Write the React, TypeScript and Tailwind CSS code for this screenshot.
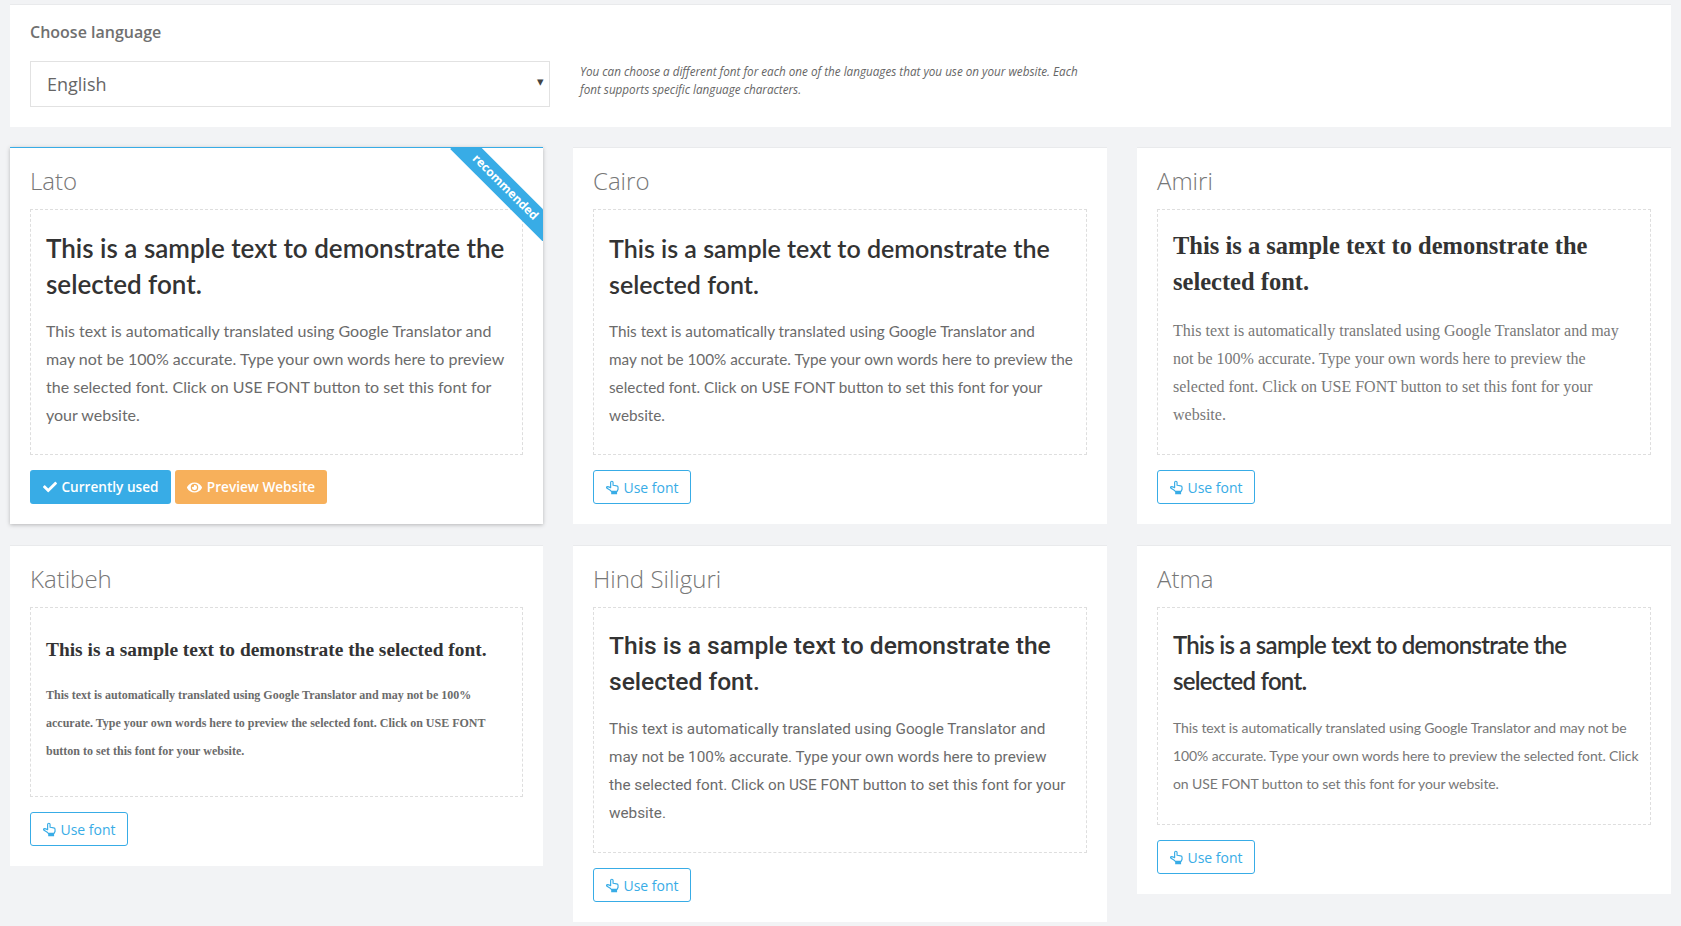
import React from "react";
import { FaCheck, FaEye } from "react-icons/fa";

type Card = {
  name: string;
  head: string[];
  body: string[];
  headClass: string;
  bodyClass: string;
  boxClass: string;
  current?: boolean;
};

const cards: Card[] = [
  {
    name: "Lato",
    head: ["This is a sample text to demonstrate the", "selected font."],
    body: [
      "This text is automatically translated using Google Translator and",
      "may not be 100% accurate. Type your own words here to preview",
      "the selected font. Click on USE FONT button to set this font for",
      "your website.",
    ],
    headClass: "font-['Lato',sans-serif] font-semibold text-[26px] leading-[36px] mt-[5px] mb-[15px]",
    bodyClass: "font-['Lato',sans-serif] text-[16px] leading-[28px] text-[#6b6b6b]",
    boxClass: "h-[246px]",
    current: true,
  },
  {
    name: "Cairo",
    head: ["This is a sample text to demonstrate the", "selected font."],
    body: [
      "This text is automatically translated using Google Translator and",
      "may not be 100% accurate. Type your own words here to preview the",
      "selected font. Click on USE FONT button to set this font for your",
      "website.",
    ],
    headClass: "font-['Lato',sans-serif] font-semibold text-[25px] leading-[36px] mt-[5px] mb-[15px]",
    bodyClass: "font-['Lato',sans-serif] text-[15.3px] leading-[28px] text-[#6b6b6b]",
    boxClass: "h-[246px]",
  },
  {
    name: "Amiri",
    head: ["This is a sample text to demonstrate the", "selected font."],
    body: [
      "This text is automatically translated using Google Translator and may",
      "not be 100% accurate. Type your own words here to preview the",
      "selected font. Click on USE FONT button to set this font for your",
      "website.",
    ],
    headClass: "font-['Liberation_Serif',serif] font-bold text-[24.5px] leading-[36px] mt-[3px] mb-[17px]",
    bodyClass: "font-['Liberation_Serif',serif] text-[16px] leading-[28px] text-[#777]",
    boxClass: "h-[246px]",
  },
  {
    name: "Katibeh",
    head: ["This is a sample text to demonstrate the selected font."],
    body: [
      "This text is automatically translated using Google Translator and may not be 100%",
      "accurate. Type your own words here to preview the selected font. Click on USE FONT",
      "button to set this font for your website.",
    ],
    headClass: "font-['Liberation_Serif',serif] font-bold text-[19.4px] leading-[36px] mt-[9px] mb-[13px]",
    bodyClass: "font-['Liberation_Serif',serif] font-bold text-[12px] leading-[28px] text-[#6b6b6b]",
    boxClass: "h-[190px]",
  },
  {
    name: "Hind Siliguri",
    head: ["This is a sample text to demonstrate the", "selected font."],
    body: [
      "This text is automatically translated using Google Translator and",
      "may not be 100% accurate. Type your own words here to preview",
      "the selected font. Click on USE FONT button to set this font for your",
      "website.",
    ],
    headClass: "font-['Roboto',sans-serif] font-medium text-[24.6px] leading-[36px] mt-[5px] mb-[15px]",
    bodyClass: "font-['Roboto',sans-serif] text-[15.3px] leading-[28px] text-[#6b6b6b]",
    boxClass: "h-[246px]",
  },
  {
    name: "Atma",
    head: ["This is a sample text to demonstrate the", "selected font."],
    body: [
      "This text is automatically translated using Google Translator and may not be",
      "100% accurate. Type your own words here to preview the selected font. Click",
      "on USE FONT button to set this font for your website.",
    ],
    headClass: "font-['Lato',sans-serif] font-semibold text-[24px] leading-[36px] tracking-[-0.75px] mt-[4px] mb-[15px]",
    bodyClass: "font-['Lato',sans-serif] text-[14px] leading-[28px] tracking-[-0.1px] text-[#777]",
    boxClass: "h-[218px]",
  },
];

function HandIcon() {
  return (
    <svg viewBox="0 0 16 16" className="w-[15px] h-[15px]" fill="none" stroke="currentColor" strokeWidth="1.25" strokeLinejoin="round">
      <path d="M6 7.6V2.6a1.3 1.3 0 0 1 2.6 0V5.6l3.9.7a1.5 1.5 0 0 1 1.4 1.5V10l-1.1 2.2H6.8L5.6 11 2.2 8.9a1 1 0 0 1 .4-1.9C3.6 7 5 7.6 6 8.2Z" />
      <rect x="6.6" y="12.4" width="6.3" height="2.8" fill="currentColor" stroke="none" />
    </svg>
  );
}

function FontCard({ card }: { card: Card }) {
  return (
    <div
      className={
        card.current
          ? "relative bg-white px-[20px] pb-[20px] border-t border-t-[#38ace6] shadow-[0_1px_4px_rgba(0,0,0,0.25)]"
          : "relative bg-white px-[20px] pb-[20px] border-t border-t-[#e9eaec]"
      }
    >
      {card.current && (
        <div className="absolute top-0 right-0 w-[93px] h-[93px] overflow-hidden">
          <div className="absolute left-[-11px] top-[28px] w-[132px] h-[23px] rotate-45 bg-[#38ace6] text-white text-center font-['Open_Sans',sans-serif] font-bold text-[12px] leading-[22px]">
            recommended
          </div>
        </div>
      )}
      <h2 className="font-['Open_Sans',sans-serif] font-light text-[#777] text-[24px] leading-[34px] pt-[16px] pb-[11px]">
        {card.name}
      </h2>
      <div className={`border border-dashed border-[#dedede] px-[15px] pt-[15px] ${card.boxClass}`}>
        <h3 className={`text-[#333] whitespace-nowrap ${card.headClass}`}>
          {card.head.map((l) => (
            <div key={l}>{l}</div>
          ))}
        </h3>
        <div className={`whitespace-nowrap ${card.bodyClass}`}>
          {card.body.map((l) => (
            <div key={l}>{l}</div>
          ))}
        </div>
      </div>
      <div className="flex gap-[4px] mt-[15px] font-['Open_Sans',sans-serif] text-[14px]">
        {card.current ? (
          <>
            <button className="h-[34px] w-[141px] rounded-[3px] bg-[#38ace6] text-white font-semibold text-[13.6px] flex items-center justify-center gap-[5px]">
              <FaCheck className="text-[14px]" />
              Currently used
            </button>
            <button className="h-[34px] w-[152px] rounded-[3px] bg-[#f7b05b] text-white font-semibold text-[13.6px] flex items-center justify-center gap-[5px]">
              <FaEye className="text-[15px]" />
              Preview Website
            </button>
          </>
        ) : (
          <button className="h-[34px] w-[98px] rounded-[3px] border border-[#38ace6] bg-white text-[#38ace6] flex items-center justify-center gap-[3px]">
            <HandIcon />
            Use font
          </button>
        )}
      </div>
    </div>
  );
}

export default function App() {
  return (
    <div className="min-h-[926px] bg-[#f2f3f5] pt-[4px] pl-[10px] pr-[10px] font-['Open_Sans',sans-serif]">
      <div className="bg-white border-t border-t-[#e9eaec] h-[123px] px-[20px] pt-[15px]">
        <div className="text-[16px] leading-[24px] font-semibold text-[#707070]">Choose language</div>
        <div className="flex mt-[17px] gap-[30px]">
          <div className="relative w-[520px] h-[46px]">
            <select className="appearance-none w-full h-full border border-[#e2e2e2] bg-white px-[16px] text-[18px] text-[#666] outline-none rounded-none">
              <option>English</option>
            </select>
            <span className="absolute right-[6px] top-[11px] text-[13px] leading-[18px] text-[#444]">▾</span>
          </div>
          <p className="w-[510px] text-[11.7px] leading-[18px] italic text-[#666] pt-[1px]">
            You can choose a different font for each one of the languages that you use on your website. Each font supports specific language characters.
          </p>
        </div>
      </div>
      <div className="grid grid-cols-[533px_534px_534px] gap-x-[30px] gap-y-[21px] items-start mt-[20px]">
        {cards.map((c) => (
          <FontCard key={c.name} card={c} />
        ))}
      </div>
    </div>
  );
}
